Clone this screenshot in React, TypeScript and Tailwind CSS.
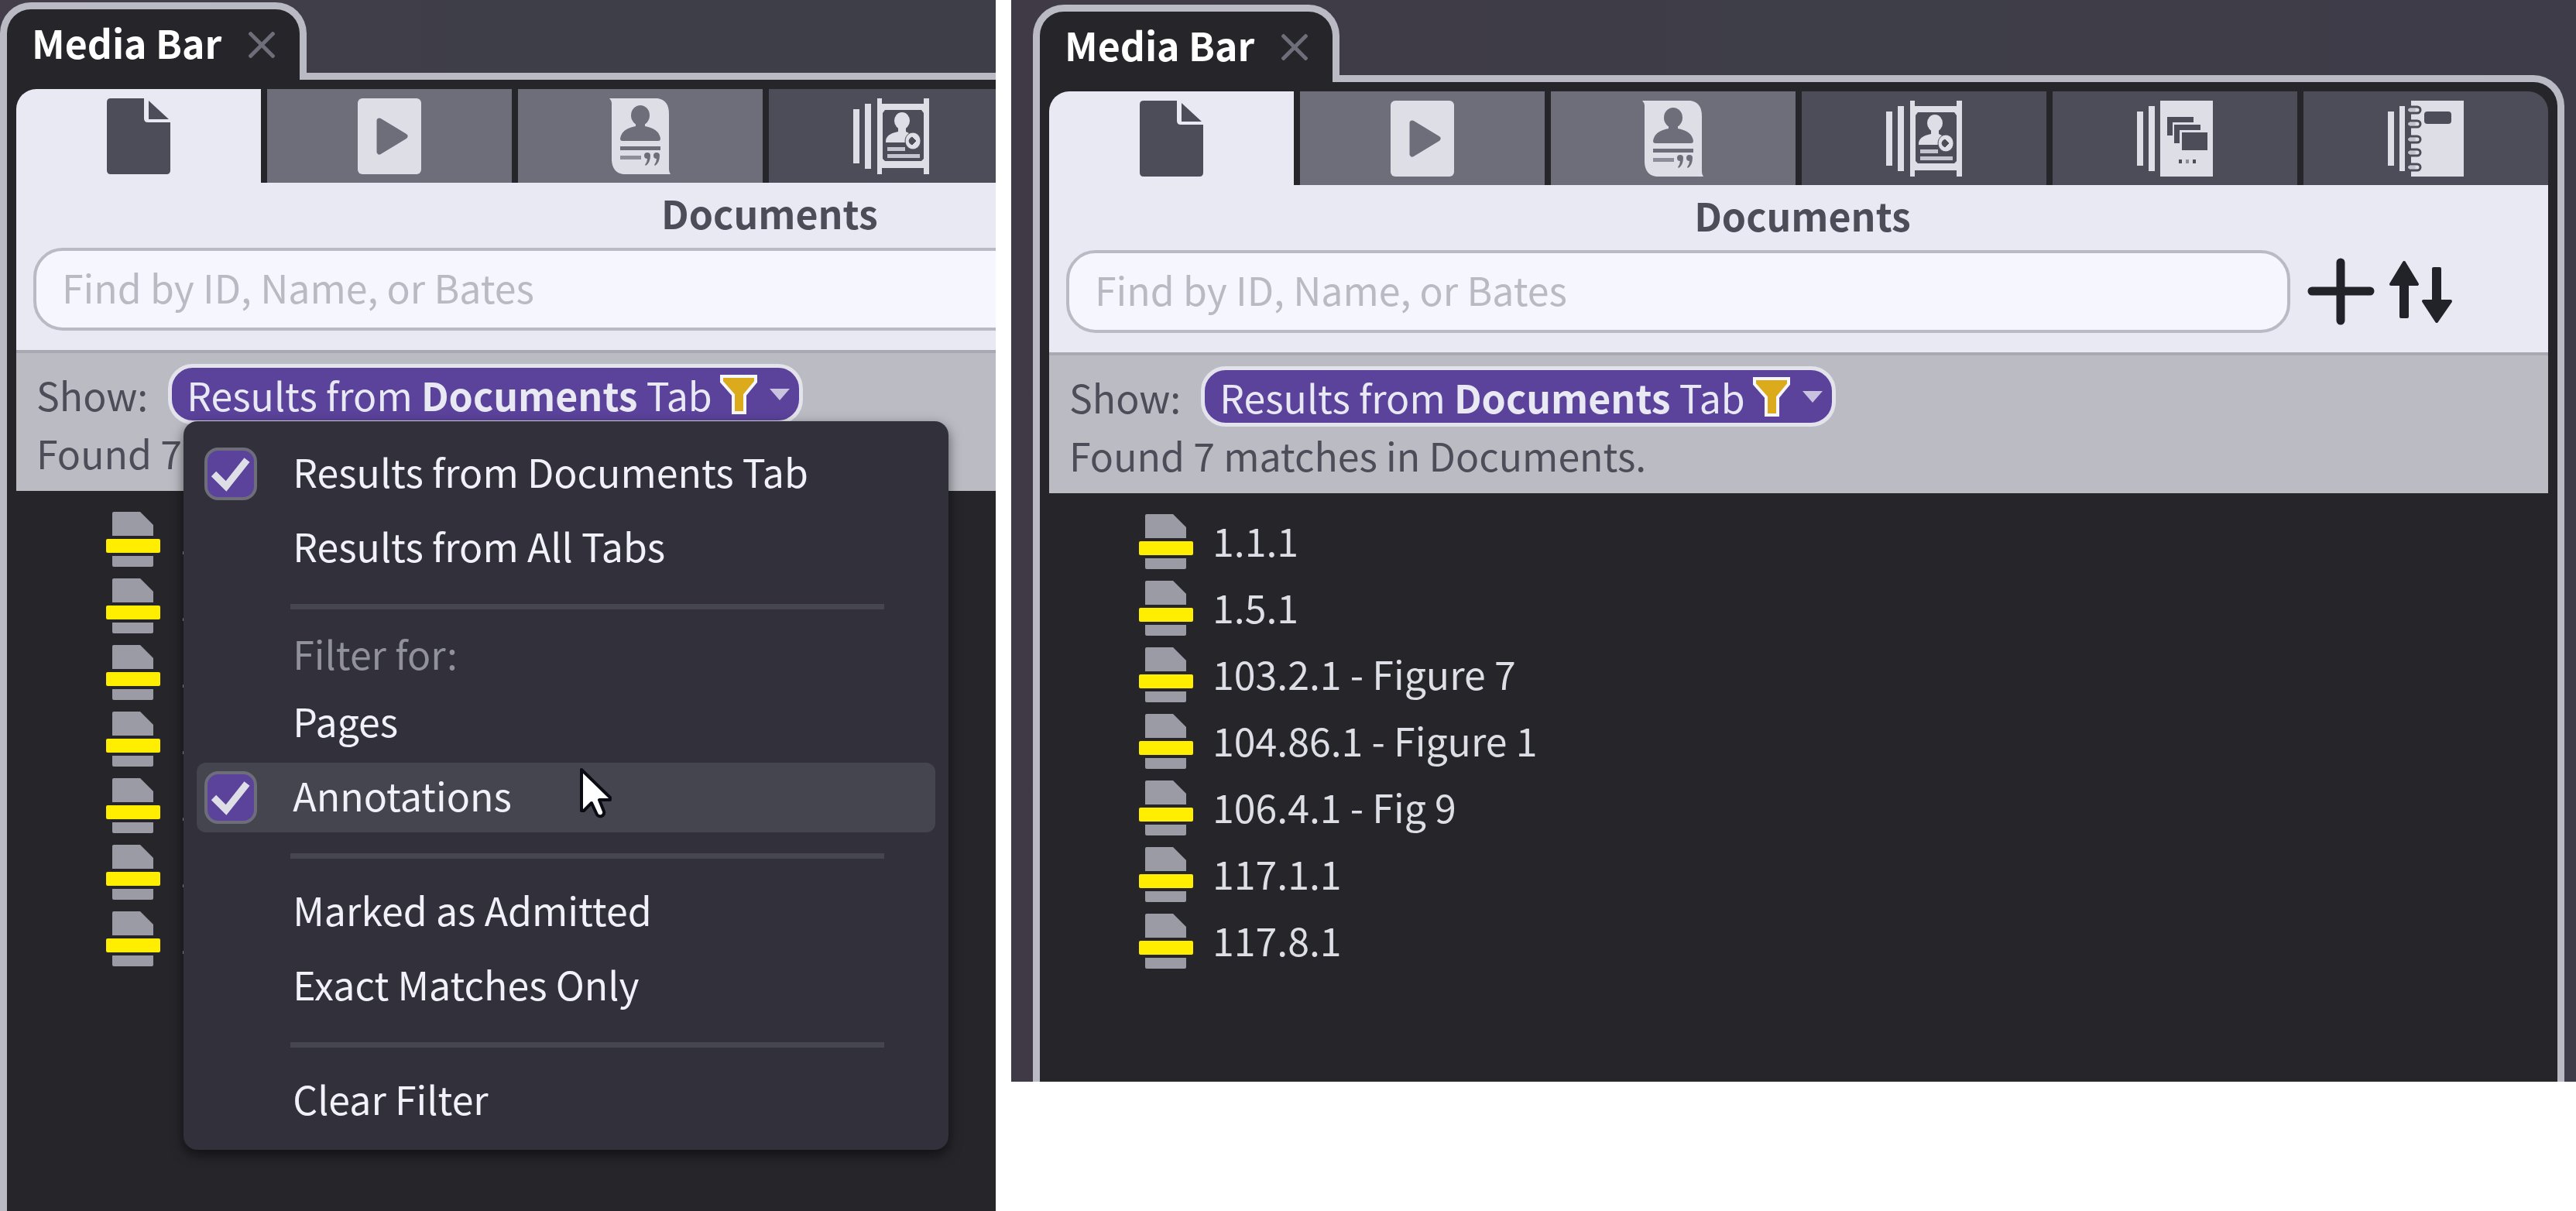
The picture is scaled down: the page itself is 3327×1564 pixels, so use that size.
import { useId, useState } from "react";

type MenuEntry =
  | { kind: "item"; label: string; checked?: boolean; active?: boolean }
  | { kind: "heading"; label: string }
  | { kind: "rule" };

const RESULTS = [
  "1.1.1",
  "1.5.1",
  "103.2.1 - Figure 7",
  "104.86.1 - Figure 1",
  "106.4.1 - Fig 9",
  "117.1.1",
  "117.8.1",
];

const MENU: MenuEntry[] = [
  { kind: "item", label: "Results from Documents Tab", checked: true },
  { kind: "item", label: "Results from All Tabs" },
  { kind: "rule" },
  { kind: "heading", label: "Filter for:" },
  { kind: "item", label: "Pages" },
  { kind: "item", label: "Annotations", checked: true, active: true },
  { kind: "rule" },
  { kind: "item", label: "Marked as Admitted" },
  { kind: "item", label: "Exact Matches Only" },
  { kind: "rule" },
  { kind: "item", label: "Clear Filter" },
];

function DocumentIcon() {
  return (
    <svg viewBox="0 0 82 98" className="h-[98px] w-[82px]" fill="#4d4d59">
      <path d="M5 0H48V26Q48 31 53 31H82V93Q82 98 77 98H5Q0 98 0 93V5Q0 0 5 0Z" />
      <path d="M54 3L80 27H54Z" />
    </svg>
  );
}

function ClipIcon() {
  return (
    <svg viewBox="0 0 82 98" className="h-[98px] w-[82px]">
      <rect width="82" height="98" rx="6" fill="#dedee7" />
      <path d="M28 29L61 49L28 69Z" fill="#6e6d7a" stroke="#6e6d7a" strokeWidth="7" strokeLinejoin="round" />
    </svg>
  );
}

function TranscriptIcon() {
  return (
    <svg viewBox="0 0 80 98" className="h-[98px] w-[80px]">
      <path d="M0 0H62Q77 2 77 20V92Q77 95 79 98H18Q4 96 3 80V6Q3 3 0 0Z" fill="#dedee7" />
      <g fill="#6e6d7a">
        <ellipse cx="40" cy="22" rx="12" ry="13" />
        <path d="M34 28H46V36Q64 39 66 52Q66 55 63 55H17Q14 55 14 52Q16 39 34 36Z" />
        <rect x="14" y="62" width="52" height="5" />
        <rect x="14" y="74" width="27" height="5" fill="#8e8d9a" />
        <path d="M45 74a4 4 0 1 1 8 0q0 9-6 13l-1-1q3-4 3-8a4 4 0 0 1-4-4Z" />
        <path d="M57 74a4 4 0 1 1 8 0q0 9-6 13l-1-1q3-4 3-8a4 4 0 0 1-4-4Z" />
      </g>
    </svg>
  );
}

function DesignationIcon() {
  return (
    <svg viewBox="0 0 98 98" className="h-[98px] w-[98px]" fill="#dedee7">
      <rect x="0" y="14" width="8" height="70" />
      <rect x="15" y="7" width="8" height="84" />
      <path d="M31 0H37V7H91V0H98V98H91V90H37V98H31ZM41 15L38 19V78L41 81H88L91 78V19L88 15Z" fillRule="evenodd" />
      <ellipse cx="63" cy="29" rx="10" ry="11" />
      <path d="M58 36H68V43L76 47L70 57H42Q41 46 58 43Z" />
      <path d="M77 44a10 11 0 1 0 .1 0ZM76 50L81 55L76 60Q72 58 72 55Q72 52 76 50Z" fillRule="evenodd" stroke="#4d4d59" strokeWidth="1" />
      <rect x="44" y="63" width="23" height="5" fill="#c4c4cf" />
      <rect x="44" y="72" width="42" height="5" fill="#c4c4cf" />
    </svg>
  );
}

function GalleryIcon() {
  return (
    <svg viewBox="0 0 98 98" className="h-[98px] w-[98px]" fill="#dedee7">
      <rect x="0" y="14" width="8" height="70" />
      <rect x="15" y="7" width="8" height="84" />
      <rect x="30" y="0" width="68" height="98" />
      <g fill="#4d4d59">
        <path d="M39 21H73V28H46V45H39Z" />
        <path d="M48 31H82V38H55V55H48Z" />
        <rect x="58" y="41" width="33" height="23" />
        <rect x="54" y="76" width="4" height="5" />
        <rect x="63" y="76" width="4" height="5" fill="#8e8d9a" />
        <rect x="72" y="76" width="4" height="5" />
      </g>
    </svg>
  );
}

function NotebookIcon() {
  return (
    <svg viewBox="0 0 98 98" className="h-[98px] w-[98px]" fill="#dedee7">
      <rect x="0" y="14" width="8" height="70" />
      <rect x="15" y="7" width="7" height="84" />
      <rect x="30" y="0" width="68" height="98" />
      <rect x="47" y="14" width="35" height="16" rx="4" fill="#4d4d59" />
      {[12, 30, 50, 67, 86].map((y) => (
        <g key={y}>
          <path d={"M28 " + (y - 4) + "H38a4 4 0 0 1 0 8H28"} fill="#dedee7" stroke="#4d4d59" strokeWidth="3" />
          <rect x="26" y={y - 2} width="10" height="4" rx="2" fill="#c4c4cf" />
        </g>
      ))}
    </svg>
  );
}

const TABS = [
  { name: "Documents", icon: <DocumentIcon />, tone: "bg-[#e9e9f3]" },
  { name: "Media", icon: <ClipIcon />, tone: "bg-[#6e6d7a]" },
  { name: "Transcripts", icon: <TranscriptIcon />, tone: "bg-[#6e6d7a]" },
  { name: "Designations", icon: <DesignationIcon />, tone: "bg-[#4d4d59]" },
  { name: "Galleries", icon: <GalleryIcon />, tone: "bg-[#4d4d59]" },
  { name: "Notebooks", icon: <NotebookIcon />, tone: "bg-[#4d4d59]" },
];

function AnnotationIcon() {
  return (
    <svg viewBox="0 0 70 72" className="h-[72px] w-[70px] shrink-0">
      <path d="M10 0H44L61 17V31H8V2Q8 0 10 0Z" fill="#9b9ba5" />
      <path d="M8 57H61V69Q61 71 59 71H10Q8 71 8 69Z" fill="#9b9ba5" />
      <rect x="0" y="35" width="70" height="18" rx="2" fill="#ffee00" />
    </svg>
  );
}

function FunnelIcon() {
  return (
    <svg viewBox="0 0 48 52" className="h-[52px] w-[48px]">
      <path d="M2 3H46V10L32 27V50H17V27L2 10Z" fill="#dcab1c" stroke="#f6f6ff" strokeWidth="4" />
    </svg>
  );
}

function Pointer() {
  return (
    <svg viewBox="0 0 42 66" className="pointer-events-none absolute top-[447px] left-[512px] h-[66px] w-[42px]">
      <path
        d="M2 3V56L5 56L15 46L22 61Q24 64 28 63Q32 61 31 57L25 42H39V39Z"
        fill="#ffffff"
        stroke="#0b0b14"
        strokeWidth="4"
        strokeLinejoin="round"
      />
    </svg>
  );
}

function FilterMenu() {
  return (
    <div
      role="menu"
      className="absolute top-[74px] left-[20px] z-10 flex w-[988px] flex-col gap-[6px] rounded-[18px] bg-[#32313b] px-[17px] pt-[23px] pb-[18px] shadow-[0_6px_16px_rgba(0,0,0,0.55)]"
    >
      {MENU.map((entry, i) => {
        if (entry.kind === "rule") {
          return <hr key={i} className="mt-[21px] mr-[66px] mb-[18px] ml-[121px] h-[7px] border-0 bg-[#464650]" />;
        }
        if (entry.kind === "heading") {
          return (
            <p key={i} className="h-[72px] pl-[124px] leading-[64px] text-[#91919c]">
              {entry.label}
            </p>
          );
        }
        return (
          <label
            key={i}
            className={
              "flex h-[90px] items-center gap-[46px] rounded-[12px] pl-[10px] " + (entry.active ? "bg-[#45454f]" : "")
            }
          >
            <input
              type="checkbox"
              defaultChecked={entry.checked}
              className="peer size-[68px] appearance-none rounded-[18px] border-4 border-transparent checked:border-[#6e6d7a] checked:bg-[#5b429b]"
            />
            <svg
              viewBox="0 0 68 68"
              className="pointer-events-none absolute hidden size-[68px] peer-checked:block"
              fill="none"
              stroke="#dedee7"
              strokeWidth="9"
            >
              <path d="M12 34L28 50L55 16" />
            </svg>
            <span className="pb-[8px]">{entry.label}</span>
          </label>
        );
      })}
      <Pointer />
    </div>
  );
}

function MediaBar({ menuOpen = false }: { menuOpen?: boolean }) {
  const [query, setQuery] = useState("");
  const id = useId();
  return (
    <section className="flex grow flex-col">
      <header className="z-1 -mb-[9px] flex h-[100px] w-[396px] items-center gap-[35px] rounded-t-[40px] border-[9px] border-b-0 border-[#b9bac4] bg-[#25252a] pl-[32px]">
        <h2 className="pb-[8px] text-[50px] leading-[60px] font-bold whitespace-nowrap text-white">Media Bar</h2>
        <button aria-label="Close Media Bar">
          <svg viewBox="0 0 34 34" className="size-[34px]" stroke="#6e6d7a" strokeWidth="5">
            <path d="M1 1L33 33M33 1L1 33" />
          </svg>
        </button>
      </header>
      <div className="flex grow flex-col rounded-tr-[40px] border-[9px] border-b-0 border-[#b9bac4] bg-[#25252a] px-[12px] pt-[12px]">
        <nav className="grid grid-cols-6 gap-[8px] overflow-hidden rounded-t-[26px] bg-[#25252a]">
          {TABS.map((tab) => (
            <button key={tab.name} aria-label={tab.name} className={"flex h-[121px] items-center justify-center " + tab.tone}>
              {tab.icon}
            </button>
          ))}
        </nav>
        <div className="bg-[#e9e9f3] pb-[25px] pl-[22px]">
          <h3 className="pt-[2px] pr-[12px] pb-[10px] text-center text-[50px] leading-[72px] font-bold text-[#4d4d59]">
            Documents
          </h3>
          <div className="flex items-center pr-[123px]">
            <input
              type="text"
              aria-label="Find documents"
              placeholder="Find by ID, Name, or Bates"
              value={query}
              onChange={(e) => setQuery(e.target.value)}
              className="h-[107px] min-w-0 grow rounded-[38px] border-4 border-[#b9bac4] bg-[#f6f6ff] px-[33px] pb-[8px] text-[50px] text-[#4d4d59] placeholder:text-[#b9bac4]"
            />
            <button aria-label="Add" className="ml-[22px]">
              <svg viewBox="0 0 87 87" className="size-[87px]" stroke="#222328" strokeWidth="11" strokeLinecap="round">
                <path d="M43 6V81M6 43H81" />
              </svg>
            </button>
            <button aria-label="Sort" className="ml-[19px]">
              <svg
                viewBox="0 0 82 82"
                className="size-[82px]"
                fill="#222328"
                stroke="#222328"
                strokeWidth="4"
                strokeLinejoin="round"
              >
                <path d="M19 3L36 31H23V73H15V31H2ZM57 11H65V53H79L61 79L44 53H57Z" />
              </svg>
            </button>
          </div>
        </div>
        <div className="border-t-4 border-[#a9a9b1] bg-[#bbbbc4] pt-[14px] pb-[14px] pl-[26px] text-[50px] leading-[72px] text-[#4d4d59]">
          <div className="flex items-center gap-[26px]">
            <span id={id}>Show:</span>
            <div className="relative">
              <button
                aria-labelledby={id}
                aria-haspopup="menu"
                aria-expanded={menuOpen}
                className="flex h-[78px] items-center rounded-[32px] border-[5px] border-[#e3e3ec] bg-[#5b429b] pr-[12px] pl-[19px] whitespace-nowrap text-[#e9e9f3]"
              >
                <span>
                  Results from <b>Documents</b> Tab
                </span>
                <span className="ml-[10px]">
                  <FunnelIcon />
                </span>
                <svg viewBox="0 0 26 15" className="ml-[16px] h-[15px] w-[26px]" fill="#c9c3e0">
                  <path d="M0 0H26L13 15Z" />
                </svg>
              </button>
              {menuOpen && (
                <div className="text-[#f1f1fa]">
                  <FilterMenu />
                </div>
              )}
            </div>
          </div>
          <p>Found 7 matches in Documents.</p>
        </div>
        <ul className="pt-[20px] pb-[138px] text-[50px] text-[#dedee7]">
          {RESULTS.map((name) => (
            <li key={name} className="flex h-[86px] items-center gap-[25px] pl-[116px]">
              <AnnotationIcon />
              <span className="pb-[6px]">{name}</span>
            </li>
          ))}
        </ul>
      </div>
    </section>
  );
}

export default function App() {
  return (
    <main className="grid min-h-screen grid-cols-[1286fr_2021fr] items-start gap-[20px] overflow-hidden bg-white font-['Noto_Sans_CJK_SC','Noto_Sans',sans-serif]">
      <div className="flex min-h-screen min-w-0 overflow-hidden bg-linear-to-r from-[#433d4a] via-[#3e3e48] to-[#3e3e48] pt-[3px]">
        <div className="flex w-[153.8%] shrink-0">
          <MediaBar menuOpen />
        </div>
      </div>
      <div className="flex min-w-0 bg-linear-to-r from-[#403a46] via-[#3e3e48] to-[#3e3c48] pt-[6px] pr-[15px] pl-[28px]">
        <MediaBar />
      </div>
    </main>
  );
}
